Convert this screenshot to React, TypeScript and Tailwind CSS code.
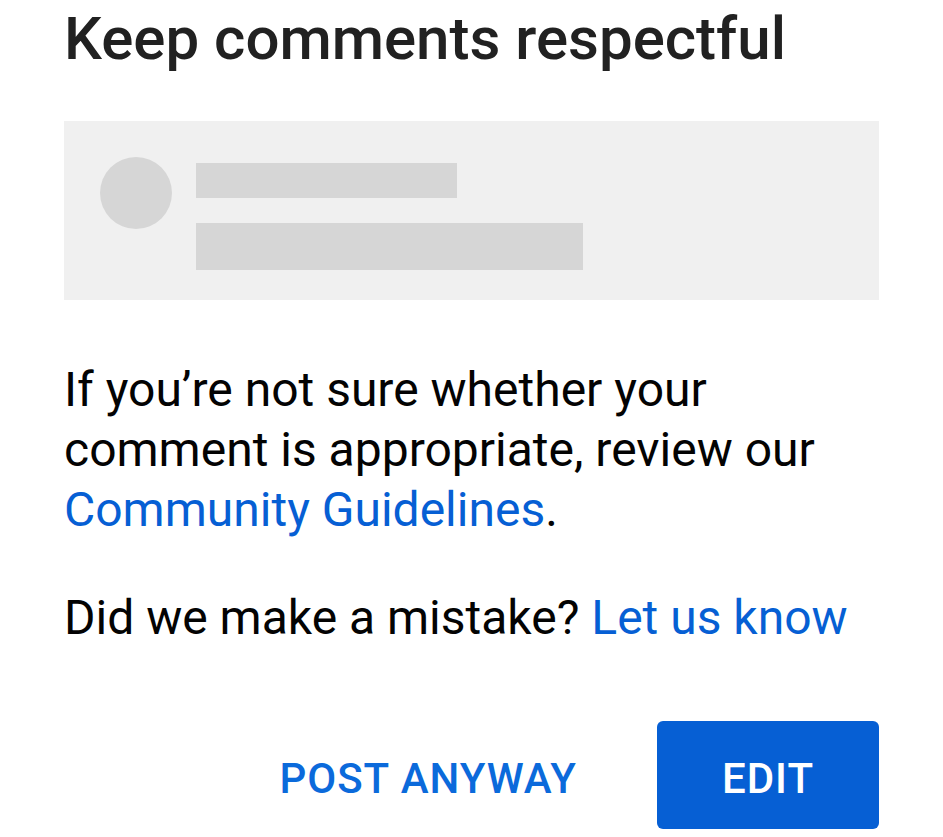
export default function App() {
  return (
    <main
      className="min-h-screen bg-white px-16 pt-[1px]"
      style={{ fontFamily: "Roboto, 'Liberation Sans', sans-serif" }}
    >
      <h1 className="text-[60px] font-medium leading-[76px] text-[#212121]">
        Keep comments respectful
      </h1>

      <div className="mt-[44px] flex h-[179px] items-start bg-[#f0f0f0] pl-[36px] pt-[36px]">
        <div className="h-[72px] w-[72px] rounded-full bg-[#d6d6d6]" />
        <div className="ml-[24px] mt-[6px] flex flex-col gap-[25px]">
          <div className="h-[35px] w-[261px] bg-[#d6d6d6]" />
          <div className="h-[47px] w-[387px] bg-[#d6d6d6]" />
        </div>
      </div>

      <p className="mt-[60px] text-[48px] leading-[60px] text-[#030303]">
        If you’re not sure whether your comment is appropriate, review our{" "}
        <a className="text-[#065fd4]">Community Guidelines</a>.
      </p>

      <p className="mt-[48px] text-[48px] leading-[60px] text-[#030303]">
        Did we make a mistake? <a className="text-[#065fd4]">Let us know</a>
      </p>

      <div className="mt-[73px] flex items-center justify-end gap-[80px]">
        <button className="pt-[6px] text-[42px] font-medium tracking-[1px] text-[#0b6adb]">
          POST ANYWAY
        </button>
        <button className="h-[108px] w-[222px] rounded-[6px] bg-[#065fd4] pt-[6px] text-[42px] font-medium tracking-[1px] text-white">
          EDIT
        </button>
      </div>
    </main>
  );
}
